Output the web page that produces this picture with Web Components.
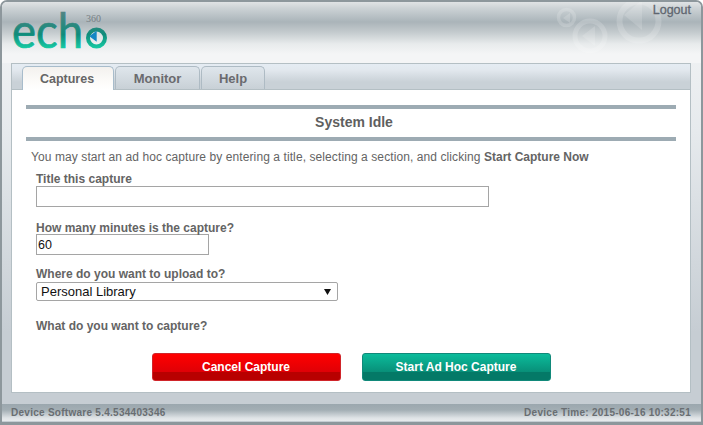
<!DOCTYPE html>
<html>
<head>
<meta charset="utf-8">
<title>Echo360 Capture</title>
<style>
  html, body { margin: 0; height: 100%; }
  body { font: 12px "Liberation Sans", Arial, sans-serif; color: #646464; overflow: hidden; }
</style>
</head>
<body>
<echo-app>
  <echo-header slot="header"></echo-header>
  <echo-tabs slot="tabs">
    <echo-tab active>Captures</echo-tab>
    <echo-tab style="width:85px">Monitor</echo-tab>
    <echo-tab style="width:64px">Help</echo-tab>
    <echo-capture slot="panel"></echo-capture>
  </echo-tabs>
  <echo-footer slot="footer"></echo-footer>
</echo-app>

<script>
  // small helper, every element just stamps its html in an open shadow root
  class Base extends HTMLElement {
    constructor() {
      super();
      this.attachShadow({ mode: 'open' });
      this.shadowRoot.innerHTML = this.constructor.html;
    }
  }

  class EchoApp extends Base {
    static html = `
      <style>
        :host { display: flex; flex-direction: column; width: 703px; height: 425px; box-sizing: border-box;
          border: solid #8d979c; border-width: 2px 2px 3px 2px; border-radius: 7px 7px 0 0;
          background: linear-gradient(#f4f5f6 0, #e6eaed 130px, #c6cdd3 330px); }
      </style>
      <slot name="header"></slot>
      <slot name="tabs"></slot>
      <slot name="footer"></slot>`;
  }

  class EchoHeader extends Base {
    static html = `
      <style>
        :host { display: block; position: relative; height: 61px; flex: none; border-radius: 5px 5px 0 0;
          background: linear-gradient(#e0e3e5 0, #cdd3d6 6px, #aab4b9 20px, #c3cacd 30px, #e8ebec 42px, #f4f5f6 52px); }
        .logo { position: absolute; left: 10px; top: -2px; }
        .deco { position: absolute; left: 550px; top: 0; }
        .logout { position: absolute; right: 10px; top: 1px; font-size: 12.5px; color: #5f6670;
          -webkit-text-stroke: .3px #5f6670; }
      </style>
      <svg class="logo" width="100" height="60" viewBox="0 0 100 60">
        <defs>
          <linearGradient id="g" gradientUnits="userSpaceOnUse" x1="0" y1="13" x2="0" y2="49">
            <stop offset="0" stop-color="#4f8583"/>
            <stop offset=".6" stop-color="#0f8c7b"/>
            <stop offset="1" stop-color="#17cfa6"/>
          </linearGradient>
        </defs>
        <text x="0" y="48" font-family="Lato, 'Open Sans', sans-serif" font-size="48" textLength="71" lengthAdjust="spacingAndGlyphs" fill="url(#g)" stroke="url(#g)" stroke-width=".7">ech</text>
        <circle cx="84.5" cy="38" r="8.5" fill="#f2f6f6" fill-opacity=".5" stroke="url(#g)" stroke-width="4"/>
        <path d="M84.7 30.7v11l-7.4-5.5z" fill="#1486c4"/>
        <text x="74" y="22" font-family="'Liberation Serif', serif" font-size="10" fill="#777f84">360</text>
      </svg>
      <svg class="deco" width="150" height="61" viewBox="0 0 150 61" fill="none" stroke="#fff" stroke-opacity=".17">
        <circle cx="14.5" cy="15.5" r="8" stroke-width="3.5"/>
        <path d="M18 11v10l-7-5z" fill="#fff" fill-opacity=".17" stroke="none"/>
        <circle cx="38" cy="34" r="15" stroke-width="5"/>
        <path d="M43 24v20l-13-10z" fill="#fff" fill-opacity=".15" stroke="none"/>
        <circle cx="87" cy="19" r="19.5" stroke-width="6"/>
        <path d="M90 -2v30l-18-15z" fill="#fff" fill-opacity=".15" stroke="none"/>
      </svg>
      <span class="logout">Logout</span>`;
  }

  class EchoTabs extends Base {
    static html = `
      <style>
        :host { display: block; flex: none; margin: 0 10px 0 9px; height: 330px; box-sizing: border-box;
          border: 1px solid #b4bfc4; background: #fff; }
        .strip { display: flex; align-items: flex-end; gap: 1px; height: 26px; padding-left: 10px; box-sizing: border-box;
          background: linear-gradient(#e5ecf3 0, #e2e8ee 6px, #c9d1d7 18px, #c9d1d7 100%); border-bottom: 1px solid #b4bfc4; }
      </style>
      <div class="strip"><slot></slot></div>
      <slot name="panel"></slot>`;
  }

  class EchoTab extends Base {
    static html = `
      <style>
        :host { display: flex; align-items: center; justify-content: center; box-sizing: border-box; width: 92px; height: 23px;
          border: 1px solid #aebbc4; border-bottom: 0; border-radius: 5px 5px 0 0; font-weight: bold; font-size: 13px; color: #6a6a6e;
          background: linear-gradient(#dfe6ec, #c8d0d6); }
        :host([active]) { height: 24px; margin-bottom: -1px; border-color: #a8bccb; color: #666; font-size: 12.5px; padding-right: 2px;
          background: linear-gradient(#f3f1ee, #fdfcfa 70%, #fff); }
      </style>
      <slot></slot>`;
  }

  class EchoField extends Base {
    static html = `
      <style>
        :host { display: block; font-weight: bold; line-height: 14px; height: 13px; }
      </style>
      <slot></slot>`;
  }

  class EchoButton extends Base {
    static html = `
      <style>
        :host { display: flex; align-items: center; justify-content: center; box-sizing: border-box; width: 189px; height: 28px;
          border-radius: 3px; color: #fff; font-weight: bold; font-size: 12px; padding-bottom: 1px;
          --a: #ff0000; --b: #e00006; --c: #b80000; --line: #d0252a;
          border: 1px solid var(--line);
          background: linear-gradient(var(--a), var(--b) 68%, var(--c) 68%, var(--c)); }
        :host([kind=go]) { --a: #0cbc9b; --b: #089079; --c: #047967; --line: #11897a; }
      </style>
      <slot></slot>`;
  }

  class EchoCapture extends Base {
    static html = `
      <style>
        :host { display: block; padding: 15px 14px 0; }
        h2 { margin: 0; height: 28px; line-height: 27px; border: solid #9dabb3; border-width: 4px 0; text-align: center;
          text-indent: 6px; font-size: 14px; color: #5f5f5f; }
        p { margin: 9px 0 0 5px; line-height: 14px; letter-spacing: .09px; }
        p b { letter-spacing: 0; }
        form { margin: 8px 0 0 10px; }
        .box { display: block; box-sizing: border-box; margin: 0; border: 1px solid #a5a5a5; background: #fff;
          font: 12px "Liberation Sans", Arial, sans-serif; color: #111; padding: 0 1px; }
        .title { width: 453px; height: 21px; margin-top: 1px; }
        .mins { width: 173px; height: 21px; font-size: 12.5px; margin-top: 0; }
        .sel { display: flex; align-items: center; justify-content: space-between; width: 302px; height: 19px; margin-top: 2px;
          padding: 0 5px 0 4px; border-radius: 2px; font-size: 13px; }
        .sel svg { margin-right: 1px; }
        .gap1 { margin-top: 14px; }
        .gap2 { margin-top: 12px; }
        .gap3 { margin-top: 18px; }
        .actions { display: flex; justify-content: center; gap: 21px; margin: 21px 0 0 -10px; }
      </style>
      <h2>System Idle</h2>
      <p>You may start an ad hoc capture by entering a title, selecting a section, and clicking <b>Start Capture Now</b></p>
      <form>
        <echo-field>Title this capture</echo-field>
        <input class="box title" type="text">
        <echo-field class="gap1">How many minutes is the capture?</echo-field>
        <input class="box mins" type="text" value="60">
        <echo-field class="gap2">Where do you want to upload to?</echo-field>
        <div class="box sel"><span>Personal Library</span>
          <svg width="7" height="6" viewBox="0 0 7 6"><path d="M0 0h7L3.5 6z" fill="#111"/></svg></div>
        <echo-field class="gap3">What do you want to capture?</echo-field>
        <div class="actions">
          <echo-button>Cancel Capture</echo-button>
          <echo-button kind="go">Start Ad Hoc Capture</echo-button>
        </div>
      </form>`;
  }

  class EchoFooter extends Base {
    static html = `
      <style>
        :host { display: flex; justify-content: space-between; align-items: center; flex: none; margin-top: 11px; height: 17px;
          padding: 0 10px 0 9px; font-size: 10px; font-weight: bold; letter-spacing: .27px; color: #696e72;
          background: linear-gradient(#9ba7ae 0, #a3aeb4 6px, #dfe3e6 14px, #e8ebed); }
      </style>
      <span>Device Software 5.4.534403346</span>
      <span>Device Time: 2015-06-16 10:32:51</span>`;
  }

  customElements.define('echo-app', EchoApp);
  customElements.define('echo-header', EchoHeader);
  customElements.define('echo-tabs', EchoTabs);
  customElements.define('echo-tab', EchoTab);
  customElements.define('echo-field', EchoField);
  customElements.define('echo-button', EchoButton);
  customElements.define('echo-capture', EchoCapture);
  customElements.define('echo-footer', EchoFooter);
</script>
</body>
</html>
